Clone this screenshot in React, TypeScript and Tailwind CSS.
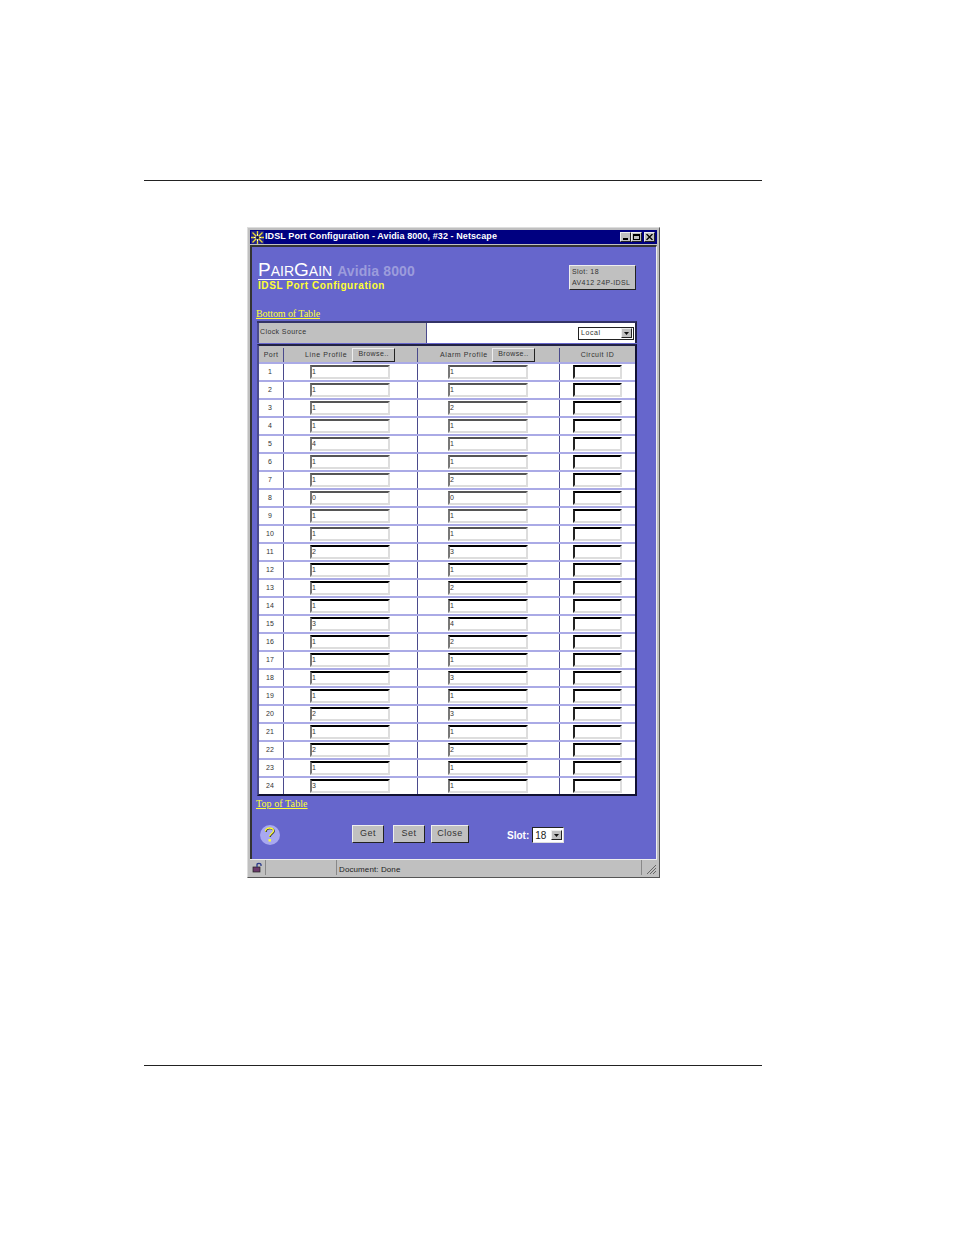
import React from 'react';

const lineValues = ['1','1','1','1','4','1','1','0','1','1','2','1','1','1','3','1','1','1','1','2','1','2','1','3'];
const alarmValues = ['1','1','2','1','1','1','2','0','1','1','3','1','2','1','4','2','1','3','1','3','1','2','1','1'];

const raised = 'border border-t-[#eeeeee] border-l-[#eeeeee] border-r-[#222222] border-b-[#222222] bg-[#c0c0c0]';

const Field = ({ value, width, early, dark }: { value?: string; width: string; early: boolean; dark?: boolean }) => (
  <div className={`${width} mt-px h-[14px] bg-white border-2 border-r-[#dddddd] border-b-[#dddddd] text-[7px] leading-[10px] text-[#333333] ${dark ? 'border-l-[#222222]' : 'border-l-[#777777]'} ${early ? 'border-t-[#555555]' : 'border-t-black'}`}>
    {value}
  </div>
);

const Browse = () => (
  <div className={`${raised} w-[43px] h-[14px] text-[7px] leading-[10px] text-center tracking-[0.4px] text-[#333333]`}>Browse..</div>
);

const ActionButton = ({ label, width }: { label: string; width: string }) => (
  <div className={`${raised} ${width} h-[18px] text-[9px] leading-[15px] text-center tracking-[0.5px] text-[#333333]`}>{label}</div>
);

const DropArrow = () => (
  <div className={`${raised} w-[11px] h-[10px] flex items-center justify-center`}>
    <svg width="5" height="3" viewBox="0 0 5 3"><path d="M0 0h5L2.500 3z" fill="#111111" /></svg>
  </div>
);

const App: React.FC = () => {
  return (
    <div className="w-[954px] h-[1235px] bg-white overflow-hidden font-['Liberation_Sans',Arial,sans-serif]">
      <div className="h-[180px]" />
      <div className="ml-[144px] w-[618px] h-px bg-[#222222]" />

      {/* Browser window */}
      <div className="ml-[247px] mt-[46px] w-[413px] h-[651px] bg-[#c0c0c0] border-r border-b border-[#555555] border-t-[#dddddd] border-l-[#dddddd] border-t border-l p-[2px] flex flex-col">
        <div className="h-[14px] bg-[#000080] flex items-center pl-[1px] pr-[2px] shrink-0">
          <svg width="13" height="13" viewBox="0 0 13 13" className="shrink-0">
            <rect width="13" height="13" fill="#20208a" />
            <path d="M6.500 0v13M0 6.500h13M1.500 1.500l10 10M11.500 1.500l-10 10" stroke="#e8d830" strokeWidth="1.300" />
            <path d="M3 6.500h7M6.500 3v7" stroke="#ffffff" strokeWidth="1" />
            <circle cx="6.500" cy="6.500" r="1.800" fill="#1a1a50" />
          </svg>
          <span className="ml-[1px] text-[9px] font-bold text-white tracking-[0.09px] whitespace-nowrap">IDSL Port Configuration - Avidia 8000, #32 - Netscape</span>
          <div className="ml-auto flex">
            <div className={`${raised} w-[11px] h-[10px] flex items-end pl-[2px] pb-px`}><div className="w-[5px] h-[2px] bg-black" /></div>
            <div className={`${raised} w-[11px] h-[10px] mr-[2px] flex p-px`}><div className="w-full h-full border border-black border-t-2" /></div>
            <div className={`${raised} w-[11px] h-[10px] flex items-center justify-center`}>
              <svg width="7" height="6" viewBox="0 0 7 6"><path d="M0.500 0l6 6M6.500 0l-6 6" stroke="#000000" strokeWidth="1.300" /></svg>
            </div>
          </div>
        </div>

        {/* Page content */}
        <div className="mt-px flex-1 bg-[#6666cc] border-l-2 border-t-2 border-l-[#333333] border-t-[#333333] border-r border-r-[#eeeeee] pl-[5px] pr-[20px] flex flex-col">
          <div className="mt-[15px] h-[33px] flex justify-between items-start">
            <div className="ml-[1px]">
              <div className="flex items-baseline h-[18px] whitespace-nowrap">
                <div className="border-b border-white text-white leading-[15px]">
                  <span className="text-[19px]">P</span><span className="text-[14px]">AIR</span><span className="text-[19px]">G</span><span className="text-[14px]">AIN</span>
                </div>
                <span className="ml-[5px] text-[14px] font-bold text-[#9c9cdc] leading-[15px] tracking-[0.1px]">Avidia 8000</span>
              </div>
              <div className="text-[10px] font-bold text-[#ffff33] leading-[11px] tracking-[0.58px]">IDSL Port Configuration</div>
            </div>
            <div className={`mt-[3px] w-[67px] h-[25px] ${raised} border-[#222222] pl-[2px] text-[7px] leading-[11px] tracking-[0.4px] text-[#333333]`}>
              <div>Slot: 18</div>
              <div className="whitespace-nowrap">AV412 24P-IDSL</div>
            </div>
          </div>

          <a className="mt-[13px] ml-[-1px] h-[9px] text-[10px] leading-[11px] text-[#ffff33] underline font-['Liberation_Serif',serif] tracking-[-0.08px]">Bottom of Table</a>

          {/* Clock source */}
          <div className="mt-[4px] w-[380px] h-[22px] flex border-t-2 border-t-[#333366] border-r-2 border-r-[#222244]">
            <div className="w-[170px] bg-[#c0c0c0] border-l-2 border-l-[#4a4a8c] border-r border-r-[#4a4a8c] pl-[1px] text-[7px] leading-[18px] tracking-[0.4px] text-[#333333]">Clock Source</div>
            <div className="flex-1 bg-white flex items-center justify-end pr-[1px]">
              <div className="w-[56px] h-[13px] border border-[#222222] flex items-center justify-between pl-[2px] pr-px text-[7px] tracking-[0.6px] text-[#333333]">
                Local<DropArrow />
              </div>
            </div>
          </div>

          {/* Port table */}
          <div className="mt-px w-[380px] border-t-2 border-t-[#222244] border-l-2 border-l-[#4a4a8c] border-r-2 border-r-[#111133] border-b-2 border-b-[#111133]">
            <div className="h-[16px] pt-[2px] flex bg-[#c0c0c0] text-[7px] tracking-[0.45px] text-[#333333]">
              <div className="w-[25px] border-r border-[#4a4a8c] text-center leading-[14px]">Port</div>
              <div className="w-[134px] border-r border-[#4a4a8c] flex items-center pl-[21px] gap-[5px]">
                <span className="whitespace-nowrap tracking-[0.6px]">Line Profile</span><Browse />
              </div>
              <div className="w-[142px] border-r border-[#4a4a8c] flex items-center pl-[22px] gap-[4px]">
                <span className="whitespace-nowrap tracking-[0.6px]">Alarm Profile</span><Browse />
              </div>
              <div className="flex-1 text-center leading-[14px]">Circuit ID</div>
            </div>
            {lineValues.map((line, i) => (
              <div key={i} className="h-[18px] flex bg-white border-t-2 border-t-[#aaaae6] text-[7px] text-[#333333]">
                <div className="w-[25px] border-r border-[#4a4a8c] text-center leading-[16px] pr-[2px]">{i + 1}</div>
                <div className="w-[134px] border-r border-[#4a4a8c] pl-[26px]">
                  <Field value={line} width="w-[80px]" early={i < 10} />
                </div>
                <div className="w-[142px] border-r border-[#4a4a8c] pl-[30px]">
                  <Field value={alarmValues[i]} width="w-[80px]" early={i < 10} />
                </div>
                <div className="flex-1 pl-[13px]">
                  <Field width="w-[49px]" early={false} dark />
                </div>
              </div>
            ))}
          </div>

          <a className="mt-[2px] ml-[-1px] h-[11px] text-[10px] leading-[11px] text-[#ffff33] underline font-['Liberation_Serif',serif] tracking-[0.08px]">Top of Table</a>

          {/* Footer controls */}
          <div className="mt-[16px] flex items-start">
            <div className="ml-[3px] w-[20px] h-[20px] rounded-full bg-[#a8a8f0] flex items-center justify-center">
              <svg width="12" height="16" viewBox="0 0 12 16">
                <path d="M2 5C2 2.500 4 1.500 6 1.500S10 2.500 10 4.500 6 7 6 10" fill="none" stroke="#222222" strokeWidth="1.500" />
                <path d="M1.500 4.500C1.500 2 3.500 1 5.500 1S9.500 2 9.500 4 5.500 6.500 5.500 9.500" fill="none" stroke="#ffff33" strokeWidth="1.300" />
                <rect x="4.500" y="12" width="2.500" height="2.500" fill="#ffff33" />
              </svg>
            </div>
            <div className="ml-[72px] flex gap-[9px]">
              <ActionButton label="Get" width="w-[32px]" />
              <ActionButton label="Set" width="w-[32px]" />
              <div className="ml-[-3px]"><ActionButton label="Close" width="w-[38px]" /></div>
            </div>
            <div className="ml-[38px] mt-[2px] flex items-center">
              <span className="text-[10px] font-bold text-white">Slot:</span>
              <div className="ml-[3px] w-[32px] h-[16px] bg-white border border-t-[#222222] border-l-[#222222] border-r-[#dddddd] border-b-[#dddddd] flex items-center justify-between pl-[2px] pr-px text-[10px] text-[#222222]">
                18<DropArrow />
              </div>
            </div>
          </div>
        </div>

        {/* Status bar */}
        <div className="h-[16px] shrink-0 flex text-[8px] text-[#222222] border-t border-[#eeeeee]">
          <div className="w-[16px] flex items-center justify-center border-r border-[#888888]">
            <svg width="12" height="11" viewBox="0 0 12 11">
              <rect x="1" y="5" width="7" height="5" fill="#6a3a6a" stroke="#222222" strokeWidth="0.700" />
              <path d="M5 5V2.500C5 1 9 1 9 2.500V4" fill="none" stroke="#2a3a8a" strokeWidth="1.300" />
            </svg>
          </div>
          <div className="w-[70px] border-r border-[#888888] ml-px" />
          <div className="flex-1 pl-[2px] leading-[19px] tracking-[0.1px] border-r border-[#888888]">Document: Done</div>
          <div className="w-[15px] flex items-end justify-end">
            <svg width="12" height="12" viewBox="0 0 12 12"><path d="M11 2L2 11M11 5L5 11M11 8L8 11" stroke="#666666" strokeWidth="1" /></svg>
          </div>
        </div>
      </div>

      <div className="ml-[144px] mt-[187px] w-[618px] h-px bg-[#222222]" />
    </div>
  );
};

export default App;
